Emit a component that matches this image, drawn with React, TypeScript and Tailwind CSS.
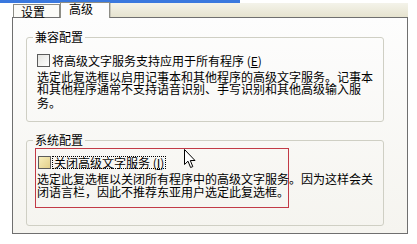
import React from 'react'

const cjk = "font-['Noto_Sans_CJK_SC','Noto_Sans_CJK_JP',sans-serif]"

function Box({ yellow = false }: { yellow?: boolean }) {
    return (
        <span
            className={
                'inline-block w-[13px] h-[13px] shrink-0 border border-[#5b5b5b] ' +
                (yellow ? 'bg-linear-to-br from-[#f7eebc] to-[#e2cf8a]' : 'bg-linear-to-br from-[#e4e4e0] to-[#ffffff]')
            }
        />
    )
}

function Cursor() {
    return (
        <svg className="absolute left-[184px] top-[149px]" width="13" height="20" viewBox="0 0 13 20">
            <path
                d="M0.5 0.5 L0.5 15.5 L4 12.2 L6.6 18.5 L8.8 17.6 L6.3 11.5 L11 11.5 Z"
                fill="#ffffff"
                stroke="#000000"
                strokeWidth="1"
                strokeLinejoin="miter"
            />
        </svg>
    )
}

export default function App() {
    return (
        <div className={`relative w-[417px] h-[244px] overflow-hidden bg-white text-[12px] text-black ${cjk}`}>
            <div className="h-[3px] w-[240px] bg-[#3a78de]" />

            {/* tabs */}
            <div className="flex items-end h-[14px] pl-[13px] pr-[9px]">
                <div className="h-[13px] w-[47px] border-l border-t border-r border-[#8d8d86] bg-[#fbfbf8] pl-[7px] leading-[13px]">
                    设置
                </div>
                <div className="relative z-10 -mb-px h-[16px] w-[50px] border-l border-t border-r border-[#8d8d86] bg-[#fdfdfd] pl-[8px] leading-[12px]">
                    高级
                </div>
                <div className="h-[14px] flex-1 border-l border-[#c9c7ba] bg-linear-to-b from-[#f4f3ea] to-[#e6e3cf]" />
            </div>

            {/* panel */}
            <div className="ml-[12px] w-[396px] h-[217px] border border-[#6f6f6f] bg-linear-to-b from-[#fdfdfd] to-[#f5f4ef] pl-[13px] pt-[12px]">
                <fieldset className="w-[358px] h-[92px] border border-[#cfcfc4] rounded-[3px]">
                    <legend className="ml-[6px] px-[2px] leading-[14px]">兼容配置</legend>
                    <div className="flex items-center pl-[10px] mt-[10px] h-[13px] leading-[13px] whitespace-nowrap">
                        <Box />
                        <span className="ml-[2px]">
                            将高级文字服务支持应用于所有程序 (<span className="underline">E</span>)
                        </span>
                    </div>
                    <div className="pl-[10px] mt-[4px] leading-[12px] whitespace-nowrap">
                        <div>选定此复选框以启用记事本和其他程序的高级文字服务。记事本</div>
                        <div>和其他程序通常不支持语音识别、手写识别和其他高级输入服</div>
                        <div className="mt-[2px]">务。</div>
                    </div>
                </fieldset>

                <fieldset className="mt-[11px] w-[358px] h-[93px] border border-[#cfcfc4] rounded-[3px]">
                    <legend className="ml-[6px] px-[2px] leading-[14px]">系统配置</legend>
                    <div className="ml-[8px] mt-[1px] w-[254px] h-[60px] border border-[#c23a46] pt-[7px] pl-[1px]">
                        <div className="flex items-center pl-[1px] h-[13px] leading-[13px] whitespace-nowrap">
                            <Box yellow />
                            <span className="ml-px border border-dotted border-black px-px leading-[11px]">
                                关闭高级文字服务 (<span className="underline">I</span>)
                            </span>
                        </div>
                        <div className="mt-[3px] leading-[13px] whitespace-nowrap">
                            <div>选定此复选框以关闭所有程序中的高级文字服务。因为这样会关</div>
                            <div>闭语言栏，因此不推荐东亚用户选定此复选框。</div>
                        </div>
                    </div>
                </fieldset>
            </div>

            <Cursor />
        </div>
    )
}
